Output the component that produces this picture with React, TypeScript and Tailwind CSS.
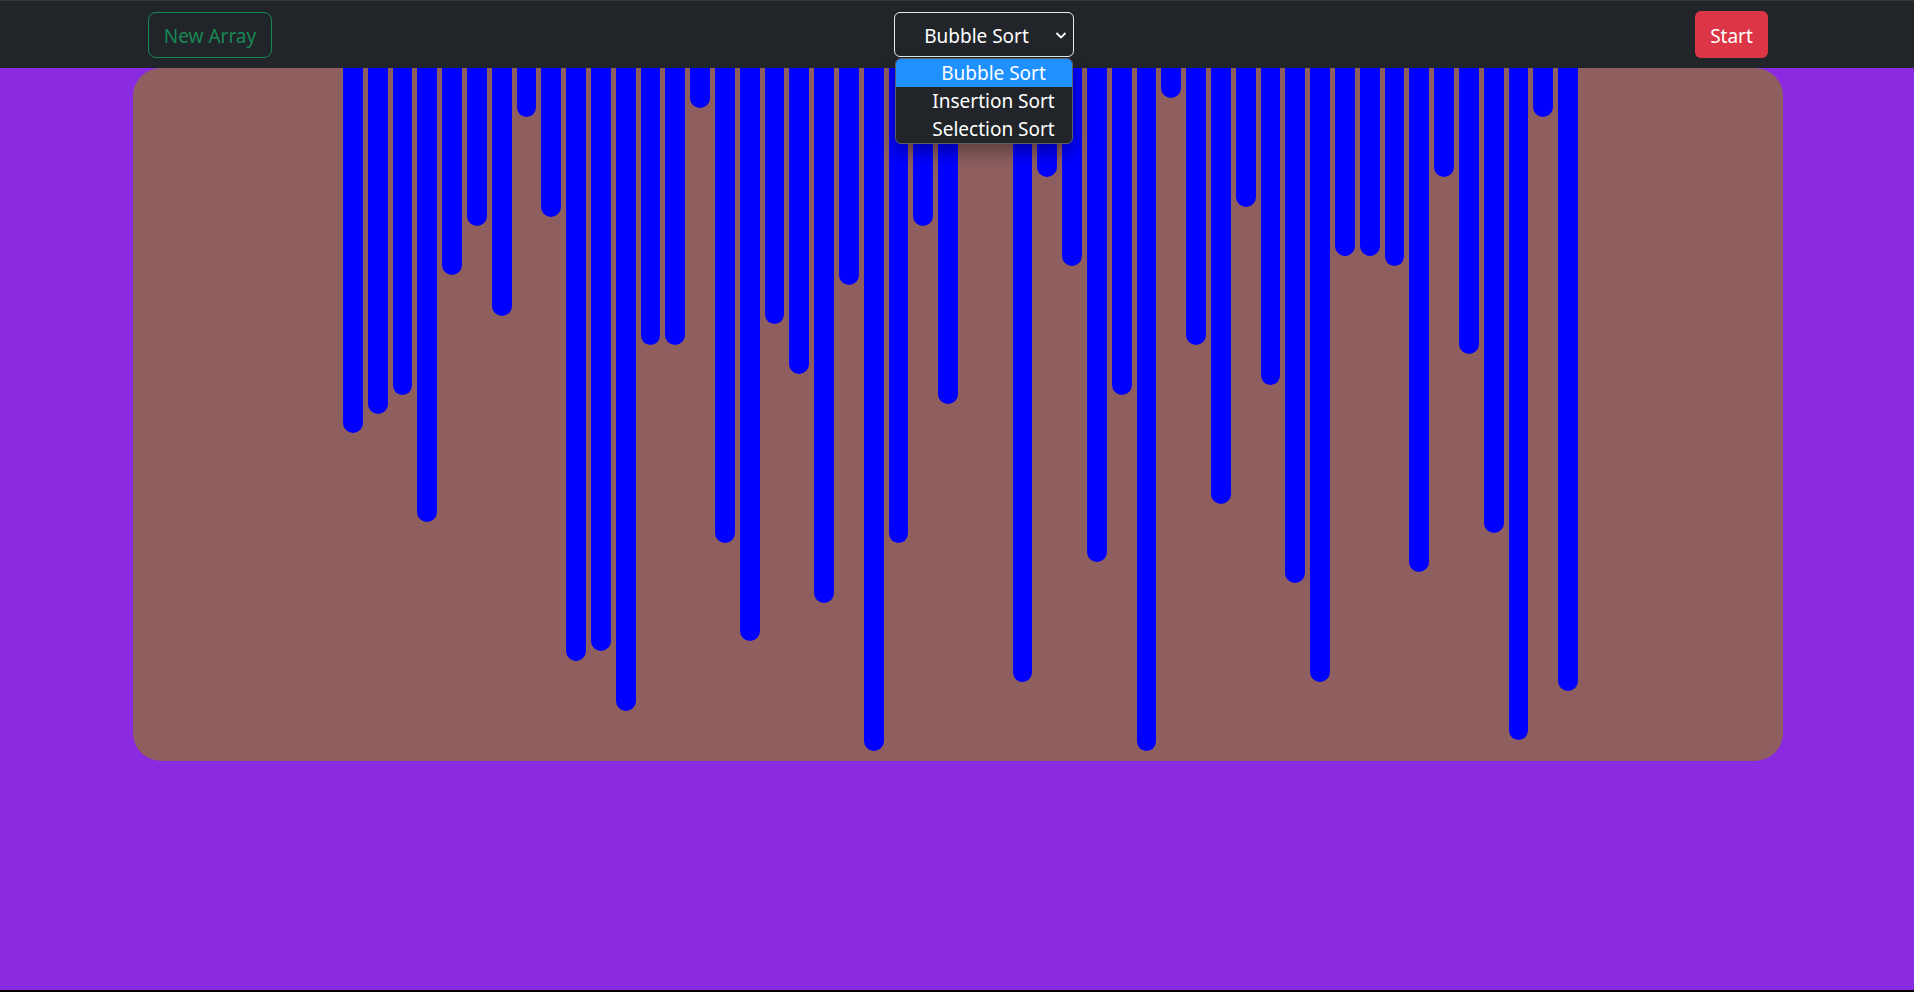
import React from 'react';

const heights = [
  365, 346, 327, 454, 207, 158, 248, 49, 149, 593,
  583, 643, 277, 277, 40, 475, 573, 256, 306, 535,
  217, 683, 475, 158, 336, 40, 60, 614, 109, 198,
  494, 327, 683, 30, 277, 436, 139, 317, 515, 614,
  188, 188, 198, 504, 109, 286, 465, 672, 49, 623,
];

const options = ['Bubble Sort', 'Insertion Sort', 'Selection Sort'];

function AlgoSelect() {
  return (
    <div className="relative">
      <div className="w-[180px] h-[45px] rounded-[6px] border border-[#e9ecef] bg-[#212529] text-white flex items-center">
        <span className="flex-1 text-center text-[19px] pl-[10px] pr-[6px] pt-[3px]">Bubble Sort</span>
        <svg className="mr-[6px]" width="12" height="12" viewBox="0 0 12 12" fill="none">
          <path d="M1.5 4l4.5 4.5 4.5-4.5" stroke="#ffffff" strokeWidth="1.8" />
        </svg>
      </div>
      <div className="absolute left-[1px] top-[46px] w-[178px] z-10 rounded-[6px] border border-[#5a5f66] bg-[#212529] overflow-hidden shadow-[0_8px_18px_rgba(0,0,0,0.35)]">
        {options.map((o, i) => (
          <div
            key={o}
            className={
              'h-[28px] flex items-center justify-center pl-[20px] pt-[1px] text-[19px] text-white leading-none ' +
              (i === 0 ? 'bg-[#1e90ff]' : '')
            }
          >
            {o}
          </div>
        ))}
      </div>
    </div>
  );
}

export default function App() {
  return (
    <div className="w-[1914px] h-[992px] flex flex-col bg-black" style={{ fontFamily: '"Noto Sans", "Open Sans", sans-serif' }}>
      <nav className="h-[68px] shrink-0 bg-[#212529] border-t border-[#34383d] flex items-center justify-between pl-[148px] pr-[146px] relative z-20">
        <button className="w-[124px] h-[46px] rounded-[8px] border border-[#198754] text-[#198754] text-[19px] pt-[3px]">
          New Array
        </button>
        <AlgoSelect />
        <button className="w-[73px] h-[47px] rounded-[6px] bg-[#dc3545] text-white text-[19px] pt-[3px]">
          Start
        </button>
      </nav>
      <main className="h-[922px] shrink-0 bg-[#8a2be2]">
        <div className="ml-[133px] w-[1650px] h-[693px] rounded-[28px] bg-[#8f5e5f] flex justify-center items-start pl-[5px]">
          <div className="flex gap-[5px] items-start">
            {heights.map((h, i) => (
              <div key={i} className="w-[19.8px] bg-[#0000ff] rounded-b-[10px]" style={{ height: h }} />
            ))}
          </div>
        </div>
      </main>
    </div>
  );
}
